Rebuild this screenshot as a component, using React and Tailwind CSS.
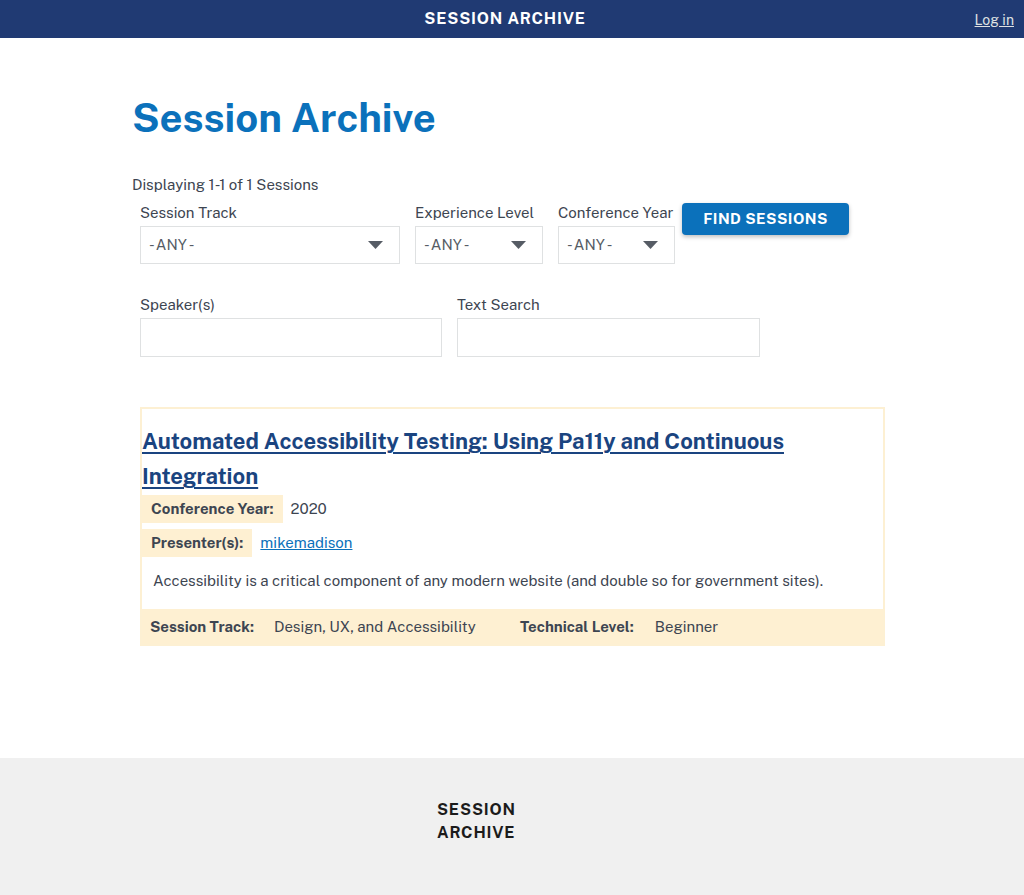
import React from 'react';

const font = { fontFamily: '"Public Sans", Roboto, "Liberation Sans", sans-serif' };

const Caret = () => (
  <svg width="15" height="8" viewBox="0 0 15 8" className="shrink-0">
    <path d="M0 0 L15 0 L7.5 8 Z" fill="#565c65" />
  </svg>
);

const Select = ({ width }) => (
  <div className={`flex h-[38px] items-center justify-between border border-[#dfe1e2] bg-white pl-2 pr-[16px] text-[15px] text-[#565c65] ${width}`}>
    <span>- ANY -</span>
    <Caret />
  </div>
);

const Field = ({ label, children }) => (
  <div className="flex flex-col">
    <label className="mb-[4px] text-[15px] leading-[18px] text-[#3d4551]">{label}</label>
    {children}
  </div>
);

export default function App() {
  return (
    <div className="min-h-[895px] bg-white text-[#1b1b1b]" style={font}>
      {/* header */}
      <header className="relative flex h-[38px] items-center justify-center bg-[#203a73]">
        <span className="ml-[-14px] text-[16px] font-bold tracking-[0.05em] text-white">SESSION ARCHIVE</span>
        <a className="absolute right-[10px] top-[10px] text-[14px] text-[#dfe1e2] underline">Log in</a>
      </header>

      <main className="pl-[132px] pt-[55px] pb-[112px]">
        <h1 className="text-[40px] font-bold leading-[50px] text-[#0b71bb]">Session Archive</h1>

        <p className="mt-[33px] text-[15px] leading-[18px] text-[#3d4551]">Displaying 1-1 of 1 Sessions</p>

        <div className="ml-[8px] mt-[10px] flex items-start gap-[15px]">
          <Field label="Session Track">
            <Select width="w-[260px]" />
          </Field>
          <Field label="Experience Level">
            <Select width="w-[128px]" />
          </Field>
          <Field label="Conference Year">
            <Select width="w-[117px]" />
          </Field>
          <button className="ml-[-8px] mt-[-1px] h-[32px] w-[167px] rounded-[4px] bg-[#0b71bb] text-[15px] font-bold tracking-[0.03em] text-white shadow-[0_2px_4px_rgba(0,0,0,0.25)]">
            FIND SESSIONS
          </button>
        </div>

        <div className="ml-[8px] mt-[32px] flex items-start gap-[15px]">
          <Field label="Speaker(s)">
            <div className="h-[39px] w-[302px] border border-[#dfe1e2] bg-white" />
          </Field>
          <Field label="Text Search">
            <div className="h-[39px] w-[303px] border border-[#dfe1e2] bg-white" />
          </Field>
        </div>

        {/* result card */}
        <div className="ml-[8px] mt-[50px] w-[745px] border-2 border-[#fdf0d3]">
          <h2 className="pt-[15px] text-[22px] font-bold leading-[35px] text-[#1a4480]">
            <a className="underline decoration-[2px] underline-offset-[3px]">
              Automated Accessibility Testing: Using Pa11y and Continuous Integration
            </a>
          </h2>
          <div className="mt-[1px] flex items-center">
            <span className="flex h-[28px] items-center bg-[#fef0d2] px-[9px] text-[15px] font-bold text-[#3d4551]">Conference Year:</span>
            <span className="ml-[8px] text-[15px] text-[#3d4551]">2020</span>
          </div>
          <div className="mt-[6px] flex items-center">
            <span className="flex h-[28px] items-center bg-[#fef0d2] px-[9px] text-[15px] font-bold text-[#3d4551]">Presenter(s):</span>
            <a className="ml-[8px] text-[15px] text-[#0b71bb] underline">mikemadison</a>
          </div>
          <p className="px-[11px] pb-[18px] pt-[14px] text-[15px] leading-[20px] text-[#3d4551]">
            Accessibility is a critical component of any modern website (and double so for government sites).
          </p>
          <div className="flex h-[35px] items-center bg-[#fef0d2] px-[8px] pt-[2px] text-[15px] text-[#3d4551]">
            <span className="font-bold">Session Track:</span>
            <span className="ml-[20px] w-[246px]">Design, UX, and Accessibility</span>
            <span className="font-bold">Technical Level:</span>
            <span className="ml-[21px]">Beginner</span>
          </div>
        </div>
      </main>

      <footer className="h-[137px] bg-[#f0f0f0] pt-[40px]">
        <div className="ml-[437px] w-[90px] text-[16px] font-bold leading-[23px] tracking-[0.05em] text-[#1b1b1b]">
          SESSION ARCHIVE
        </div>
      </footer>
    </div>
  );
}
